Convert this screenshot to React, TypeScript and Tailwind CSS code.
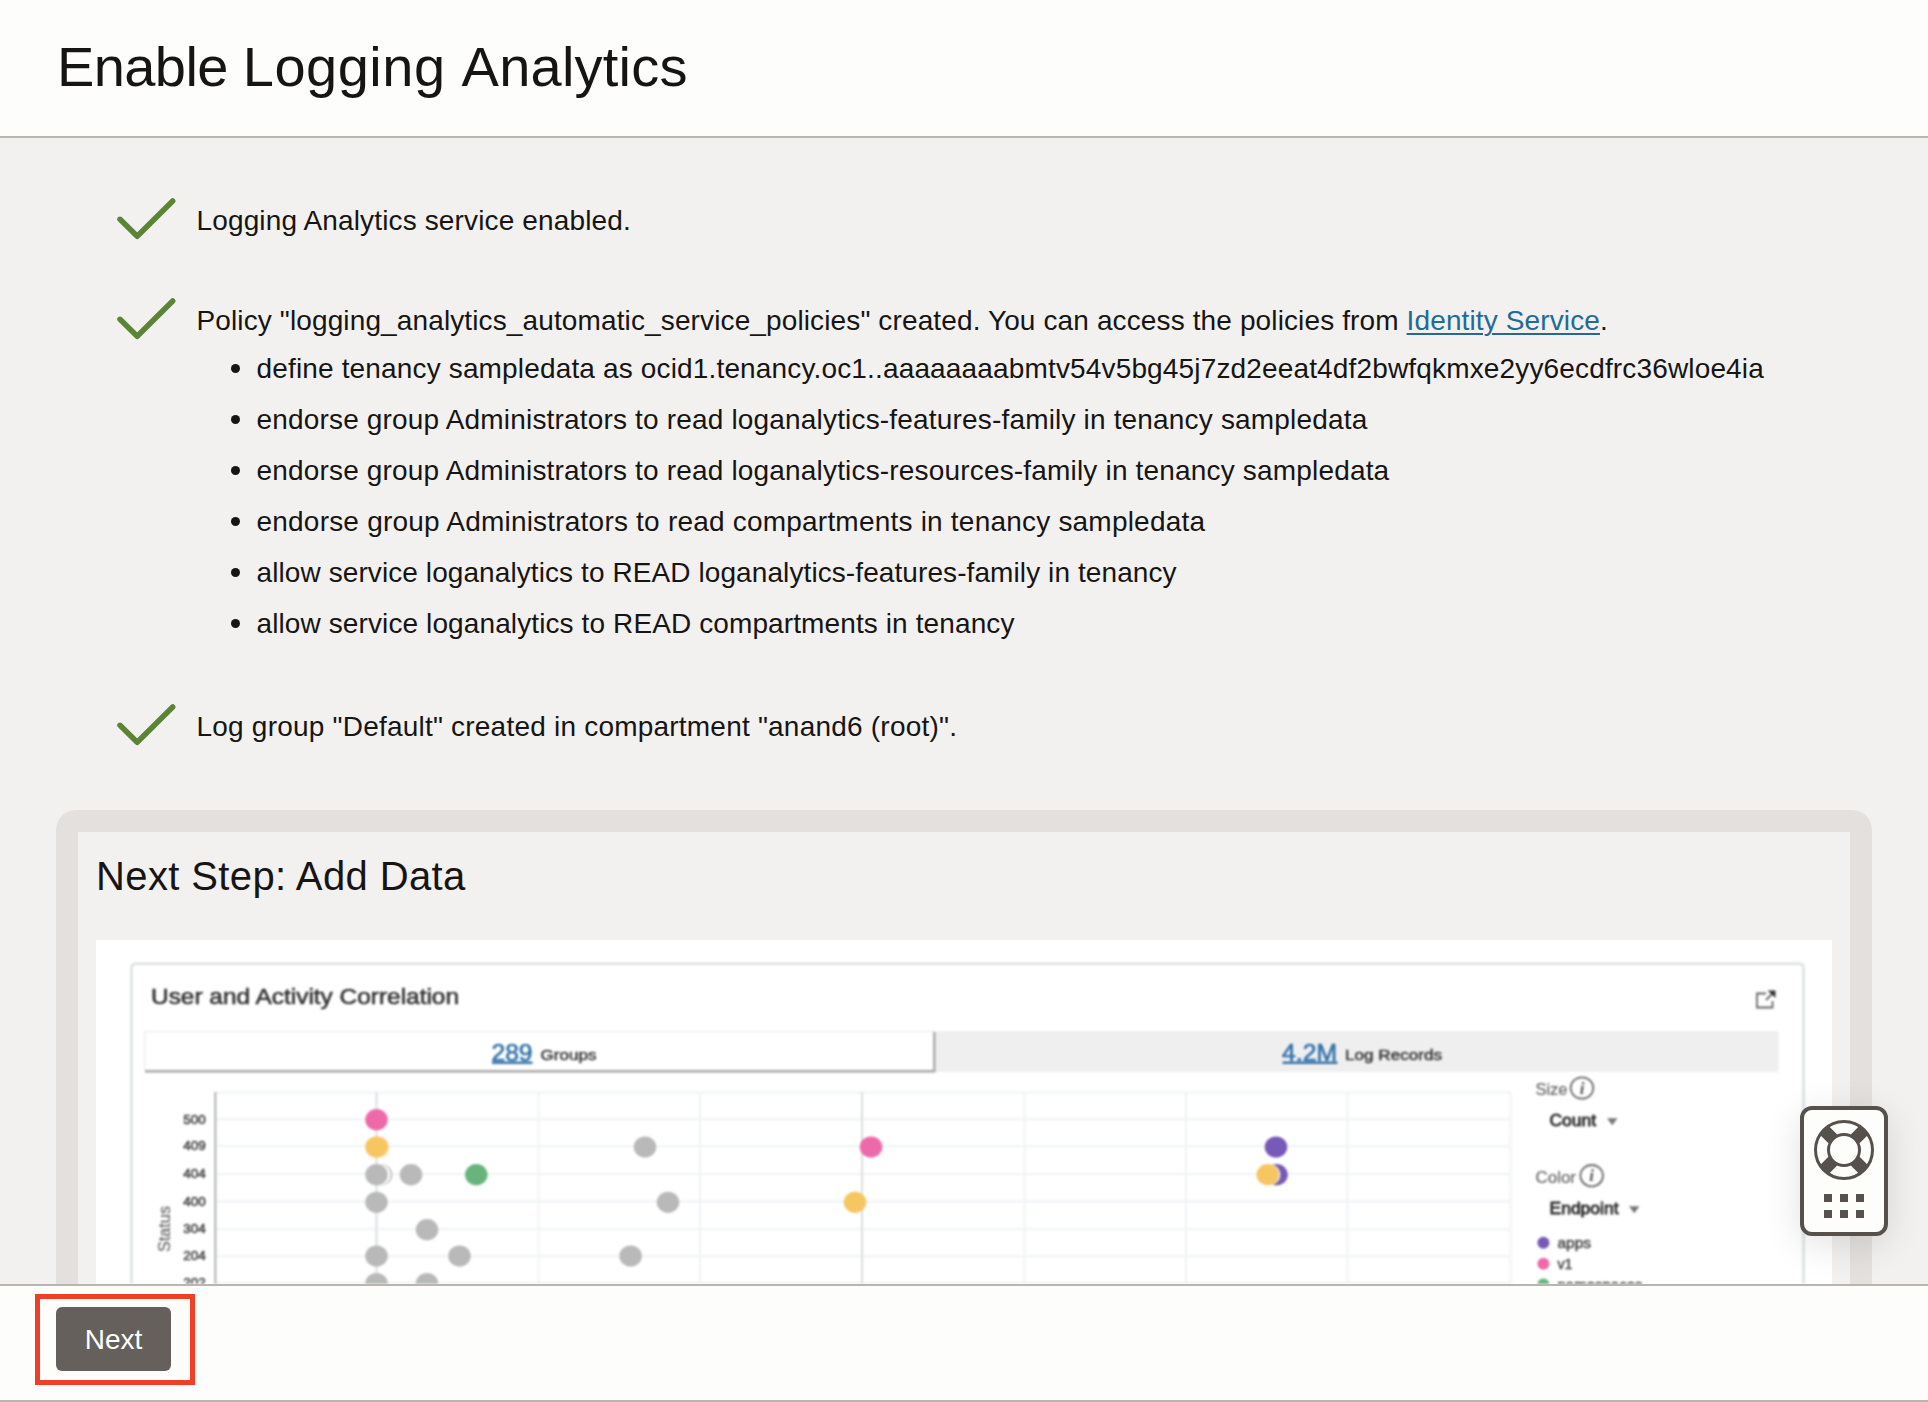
import type { ReactNode } from "react";

const policies = [
  { text: "define tenancy sampledata as ocid1.tenancy.oc1..aaaaaaaabmtv54v5bg45j7zd2eeat4df2bwfqkmxe2yy6ecdfrc36wloe4ia", tracking: "tracking-[0.155px]" },
  { text: "endorse group Administrators to read loganalytics-features-family in tenancy sampledata", tracking: "tracking-[0.175px]" },
  { text: "endorse group Administrators to read loganalytics-resources-family in tenancy sampledata", tracking: "tracking-[0.175px]" },
  { text: "endorse group Administrators to read compartments in tenancy sampledata", tracking: "tracking-[0.21px]" },
  { text: "allow service loganalytics to READ loganalytics-features-family in tenancy", tracking: "tracking-[0.09px]" },
  { text: "allow service loganalytics to READ compartments in tenancy", tracking: "tracking-[0.11px]" },
];

const GRAY = "#b9b9b9";
const PINK = "#ee69a9";
const YELLOW = "#f6c661";
const GREEN = "#68b57c";
const PURPLE = "#7759b7";

const points: [number, number, string][] = [
  [376.5, 1119.7, PINK],
  [378, 1147, "#fbe3b0"],
  [376.5, 1147, YELLOW],
  [645, 1147, GRAY],
  [871, 1147, PINK],
  [1276, 1147, PURPLE],
  [381, 1174.7, GRAY],
  [379.3, 1174.7, "#ffffff"],
  [376.5, 1174.7, GRAY],
  [411, 1174.7, GRAY],
  [476.3, 1174.7, GREEN],
  [1276.5, 1174.7, PURPLE],
  [1269, 1174.7, "#ffffff"],
  [1267.8, 1174.7, YELLOW],
  [376.5, 1202.3, GRAY],
  [668, 1202.3, GRAY],
  [855, 1202.3, YELLOW],
  [427, 1229.7, GRAY],
  [376.5, 1256, GRAY],
  [459.5, 1256, GRAY],
  [630.6, 1256, GRAY],
  [376.5, 1283.5, GRAY],
  [427, 1283.5, GRAY],
];

const rows: [number, string][] = [
  [1119.3, "500"],
  [1146.2, "409"],
  [1174, "404"],
  [1201.5, "400"],
  [1229.2, "304"],
  [1256.2, "204"],
  [1283, "202"],
];

const columns = [538.6, 700, 1024.5, 1186, 1347.5, 1510.5];

function Check() {
  return (
    <svg className="h-[44px] w-[60px] shrink-0 overflow-visible" viewBox="0 0 60 44" fill="none">
      <path d="M3 20.3 L20.2 37.3 L55.7 2" stroke="#5b8534" strokeWidth="5.5" strokeLinecap="round" strokeLinejoin="round" />
    </svg>
  );
}

function Step({ children }: { children: ReactNode }) {
  return (
    <div className="flex items-start">
      <Check />
      <div className="ml-[19.5px] text-[28px] leading-[44px] whitespace-nowrap">{children}</div>
    </div>
  );
}

function Info({ x, y }: { x: number; y: number }) {
  return (
    <g>
      <ellipse cx={x} cy={y} rx="11.3" ry="10.7" fill="none" stroke="#6d6d6d" strokeWidth="1.8" />
      <text x={x} y={y + 5.5} textAnchor="middle" fontFamily="Liberation Serif" fontStyle="italic" fontWeight="700" fontSize="17" fill="#555">i</text>
    </g>
  );
}

function Chart() {
  return (
    <svg className="block blur-[0.85px]" width="1736" height="344" viewBox="96 940 1736 344" fontFamily="Liberation Sans, Arial, sans-serif">
      <rect x="131.5" y="963.7" width="1672" height="420" rx="4" fill="none" stroke="#e0e4e6" strokeWidth="3" />
      <text x="151" y="1004" fontSize="22.5" textLength="308" lengthAdjust="spacingAndGlyphs" fill="#333" stroke="#333" strokeWidth="0.6">User and Activity Correlation</text>
      <g fill="none" stroke="#666" strokeWidth="1.8">
        <path d="M1766 993.5 H1757 V1007.5 H1772.5 V1001" />
        <path d="M1766 1000 L1773.5 992.5" />
        <path d="M1767.5 990.5 H1775.5 V998 Z" fill="#333" stroke="none" />
      </g>
      <rect x="145" y="1031.5" width="789" height="40" fill="#fff" stroke="#efefef" strokeWidth="1.5" />
      <rect x="935" y="1031" width="843.5" height="41" fill="#efefef" />
      <path d="M145 1071.3 H934.3 V1032" fill="none" stroke="#a8a8a8" strokeWidth="2.4" />
      <g fill="#3573ab" stroke="#3573ab" strokeWidth="0.7" fontSize="23.5">
        <text x="491.5" y="1060.7" textLength="41" lengthAdjust="spacingAndGlyphs">289</text>
        <text x="1282" y="1060.7" textLength="55" lengthAdjust="spacingAndGlyphs">4.2M</text>
        <path d="M492 1062.7 H532.5 M1282.5 1062.7 H1337.5" strokeWidth="2.4" />
      </g>
      <g fill="#3c3c3c" stroke="#3c3c3c" strokeWidth="0.5" fontSize="15.5">
        <text x="540.5" y="1060" textLength="56" lengthAdjust="spacingAndGlyphs">Groups</text>
        <text x="1345" y="1060" textLength="97" lengthAdjust="spacingAndGlyphs">Log Records</text>
      </g>
      <g stroke="#f0f2f3" strokeWidth="2">
        <path d="M215 1092.5 H1511" />
        {rows.map(([y]) => <path key={y} d={`M215 ${y} H1511`} />)}
        {columns.map((x) => <path key={x} d={`M${x} 1092 V1290`} />)}
      </g>
      <path d="M376.5 1092 V1290 M862 1092 V1290" stroke="#d9dedf" strokeWidth="2" />
      <path d="M215.3 1092 V1290" stroke="#b4b7b7" strokeWidth="2.2" />
      {rows.map(([y, label]) => (
        <text key={label} x="183.3" y={y + 4.2} fontSize="13.5" textLength="22.5" lengthAdjust="spacingAndGlyphs" fill="#484848" stroke="#484848" strokeWidth="0.6">{label}</text>
      ))}
      <text transform="translate(170 1252) rotate(-90)" fontSize="16" textLength="46" lengthAdjust="spacingAndGlyphs" fill="#666" stroke="#666" strokeWidth="0.2">Status</text>
      {points.map(([x, y, color], i) => <ellipse key={i} cx={x} cy={y} rx="11.3" ry="10.6" fill={color} />)}
      <g fill="#666" stroke="#666" strokeWidth="0.2" fontSize="16.5">
        <text x="1535.5" y="1095.2" textLength="32" lengthAdjust="spacingAndGlyphs">Size</text>
        <text x="1535.5" y="1183.2" textLength="40.5" lengthAdjust="spacingAndGlyphs">Color</text>
      </g>
      <Info x={1582} y={1088} />
      <Info x={1591.7} y={1175.7} />
      <g fill="#2c2c2c" stroke="#2c2c2c" strokeWidth="0.8" fontSize="16.5">
        <text x="1549.5" y="1126.2" textLength="46.5" lengthAdjust="spacingAndGlyphs">Count</text>
        <text x="1549.5" y="1214" textLength="69" lengthAdjust="spacingAndGlyphs">Endpoint</text>
      </g>
      <path d="M1607 1118.3 h10.5 l-5.25 7 Z M1629 1206.3 h10.5 l-5.25 7 Z" fill="#777" />
      <circle cx="1543.4" cy="1242.7" r="6" fill={PURPLE} />
      <circle cx="1543.4" cy="1263.7" r="6" fill={PINK} />
      <circle cx="1543.4" cy="1284.5" r="6" fill={GREEN} />
      <g fill="#484848" stroke="#484848" strokeWidth="0.5" fontSize="14">
        <text x="1557.5" y="1247.5" textLength="33.5" lengthAdjust="spacingAndGlyphs">apps</text>
        <text x="1557.5" y="1268.5" textLength="15" lengthAdjust="spacingAndGlyphs">v1</text>
        <text x="1557.5" y="1289.5" textLength="85" lengthAdjust="spacingAndGlyphs">namespaces</text>
      </g>
    </svg>
  );
}

function HelpWidget() {
  return (
    <div className="absolute top-[1106px] left-[1800px] flex h-[130px] w-[88px] flex-col items-center rounded-[12px] border-4 border-[#56514d] bg-[#fdfdfb] pt-[10px] shadow-[0_8px_36px_rgba(0,0,0,0.12)]">
      <svg className="size-[60px]" viewBox="-30 -30 60 60">
        <circle r="28.5" fill="none" stroke="#56514d" strokeWidth="3" />
        <circle r="15.5" fill="none" stroke="#56514d" strokeWidth="3" />
        <path d="M-19.7 -19.7 L-11.2 -11.2 M19.7 -19.7 L11.2 -11.2 M-19.7 19.7 L-11.2 11.2 M19.7 19.7 L11.2 11.2" stroke="#56514d" strokeWidth="12.5" />
      </svg>
      <div className="mt-[14px] grid grid-cols-3 gap-2">
        {[0, 1, 2, 3, 4, 5].map((i) => <span key={i} className="size-2 bg-[#56514d]" />)}
      </div>
    </div>
  );
}

export default function App() {
  return (
    <div className="relative flex h-[1402px] w-[1928px] flex-col overflow-hidden bg-[#f3f1f0] font-['Liberation_Sans',Arial,sans-serif] text-[#161513]">
      <header className="h-[138px] shrink-0 border-b-2 border-[#bab5af] bg-[#fdfdfb] pl-[57px]">
        <h1 className="pt-[34px] text-[56px] leading-[66px]">
          <span className="tracking-[-0.6px]">Enable </span>
          <span className="tracking-[0.5px]">Logging </span>
          <span className="tracking-[0.22px]">Analytics</span>
        </h1>
      </header>
      <main className="h-[1146px] shrink-0 overflow-hidden px-[56px] pt-[61px]">
        <div className="flex flex-col pl-[61px]">
          <Step><span className="tracking-[0.14px]">Logging Analytics service enabled.</span></Step>
          <div className="mt-[56px]">
            <Step>
              <p className="tracking-[0.125px]">
                Policy "logging_analytics_automatic_service_policies" created. You can access the policies from{" "}
                <a className="text-[#226b95] underline decoration-2 underline-offset-[3px]">Identity Service</a>.
              </p>
              <ul className="pl-[34px] leading-[51px]">
                {policies.map((p) => (
                  <li key={p.text} className="flex items-center gap-[17px]">
                    <span className="size-[9px] rounded-full bg-[#161513]" />
                    <span className={p.tracking}>{p.text}</span>
                  </li>
                ))}
              </ul>
            </Step>
          </div>
          <div className="mt-[56px]">
            <Step><span className="tracking-[0.215px]">Log group "Default" created in compartment "anand6 (root)".</span></Step>
          </div>
        </div>
        <section className="mt-[61px] rounded-t-[20px] bg-[#e4e0dd] px-[22px] pt-[22px]">
          <div className="bg-[#f3f1f0] px-[18px]">
            <h2 className="h-[108px] pt-[21px] text-[40px] leading-[46px] tracking-[0.38px]">Next Step: Add Data</h2>
            <div className="bg-white"><Chart /></div>
          </div>
        </section>
      </main>
      <HelpWidget />
      <footer className="flex h-[118px] shrink-0 border-y-2 border-[#bab5af] bg-[#fdfdfb] pt-[8px] pl-[35px]">
        <div className="flex h-[91px] w-[160px] items-start border-[5px] border-[#ee4026] pt-[8px] pl-[16px]">
          <button className="h-[64px] w-[115px] rounded-[6px] bg-[#65605b] pt-[2px] text-[28px] text-white">Next</button>
        </div>
      </footer>
    </div>
  );
}
